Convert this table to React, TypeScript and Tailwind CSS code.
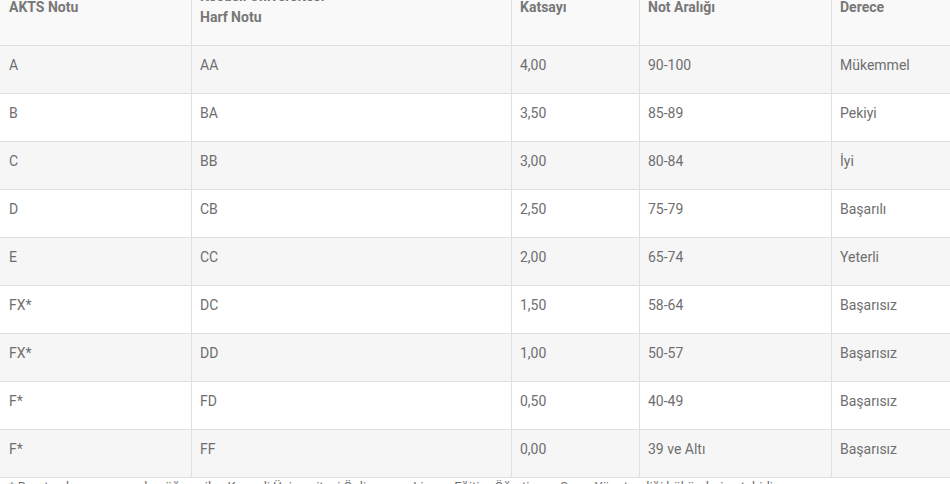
const rows = [
  ["A", "AA", "4,00", "90-100", "Mükemmel"],
  ["B", "BA", "3,50", "85-89", "Pekiyi"],
  ["C", "BB", "3,00", "80-84", "İyi"],
  ["D", "CB", "2,50", "75-79", "Başarılı"],
  ["E", "CC", "2,00", "65-74", "Yeterli"],
  ["FX*", "DC", "1,50", "58-64", "Başarısız"],
  ["FX*", "DD", "1,00", "50-57", "Başarısız"],
  ["F*", "FD", "0,50", "40-49", "Başarısız"],
  ["F*", "FF", "0,00", "39 ve Altı", "Başarısız"],
]

const grid = "grid grid-cols-[191px_320px_128px_192px_1fr]"

export default function App() {
  return (
    <div className="h-[484px] w-[950px] overflow-hidden bg-white font-['Roboto',sans-serif] text-[14px] leading-[21px]">
      <div className="-mt-[24px] w-[1040px]">
        <div className={`${grid} border-y border-[#e0e0e0] bg-[#f9f9f9] font-bold text-[#777]`}>
          <div className="flex items-center pl-[9px] pr-2 pt-[9px] pb-[17px]">AKTS Notu</div>
          <div className="border-l border-[#e0e0e0] pl-2 pr-2 pt-[9px] pb-[17px]">
            Kocaeli Üniversitesi
            <br />
            Harf Notu
          </div>
          <div className="flex items-center border-l border-[#e0e0e0] pl-2 pt-[9px] pb-[17px]">Katsayı</div>
          <div className="flex items-center border-l border-[#e0e0e0] pl-2 pt-[9px] pb-[17px]">Not Aralığı</div>
          <div className="flex items-center border-l border-[#e0e0e0] pl-2 pt-[9px] pb-[17px]">Derece</div>
        </div>
        {rows.map((r, i) => (
          <div
            key={i}
            className={`${grid} border-b border-[#e0e0e0] text-[#6e6e6e] ${i % 2 === 0 ? "bg-[#f6f6f6]" : "bg-white"}`}
          >
            {r.map((c, j) => (
              <div
                key={j}
                className={`h-[47px] pt-[9px] ${j === 0 ? "pl-[9px]" : "border-l border-[#e0e0e0] pl-2"}`}
              >
                {c}
              </div>
            ))}
          </div>
        ))}
        <p className="pl-[9px] text-[13px] leading-[17px] text-[#6e6e6e]">
          * Dersten başarısız sayılan öğrenciler, Kocaeli Üniversitesi Önlisans ve Lisans Eğitim-Öğretim ve Sınav Yönetmeliği hükümlerine tabidir.
        </p>
      </div>
    </div>
  )
}
